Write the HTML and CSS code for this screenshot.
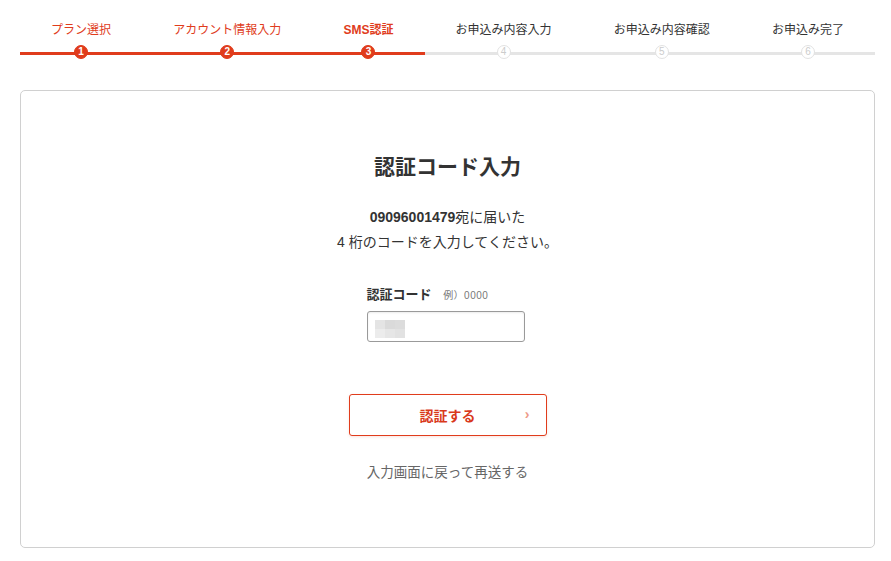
FILE: index.html
```html
<!DOCTYPE html>
<html lang="ja">

<head>
    <meta charset="UTF-8">
    <meta name="viewport" content="width=device-width, initial-scale=1.0">
    <title>SMS認証</title>
    <link rel="stylesheet" href="styles.css">
</head>

<body>
    <div class="page">
        <ol class="steps">
            <li class="step done"><span class="step-label">プラン選択</span><span class="step-num">1</span></li>
            <li class="step done"><span class="step-label">アカウント情報入力</span><span class="step-num">2</span></li>
            <li class="step done current"><span class="step-label">SMS認証</span><span class="step-num">3</span></li>
            <li class="step"><span class="step-label">お申込み内容入力</span><span class="step-num">4</span></li>
            <li class="step"><span class="step-label">お申込み内容確認</span><span class="step-num">5</span></li>
            <li class="step"><span class="step-label">お申込み完了</span><span class="step-num">6</span></li>
        </ol>

        <div class="card">
            <h1 class="title">認証コード入力</h1>
            <p class="lead"><b>09096001479</b>宛に届いた<br>4 桁のコードを入力してください。</p>

            <form class="code-form">
                <div class="field">
                    <label class="field-label" for="code">認証コード <span class="hint">例）0000</span></label>
                    <div class="code-input" id="code">
                        <span class="mosaic">
                            <i class="m1"></i><i class="m2"></i><i class="m3"></i>
                            <i class="m4"></i><i class="m5"></i><i class="m6"></i>
                        </span>
                    </div>
                </div>
                <button type="button" class="action-button">認証する<span class="chevron">›</span></button>
            </form>

            <a class="resend" href="#">入力画面に戻って再送する</a>
        </div>
    </div>
</body>

</html>
```

FILE: styles.css
```css
body {
    margin: 0;
    font-family: "Liberation Sans", Arial, "Noto Sans CJK JP", sans-serif;
    background-color: #fff;
    color: #333;
}

.page {
    padding: 0 16px 0 20px;
}

/* Progress steps */
.steps {
    display: flex;
    margin: 0;
    padding: 21px 0 0;
    list-style: none;
}

.step {
    flex: 1 1 auto;
    display: flex;
    flex-direction: column;
    align-items: center;
    height: 31px;
    border-bottom: 3px solid #e5e5e5;
    font-size: 12px;
    color: #333;
}

.step.done {
    border-bottom-color: #e03c1c;
    color: #e03c1c;
}

.step.current .step-label {
    font-weight: bold;
}

.step-label {
    line-height: 18px;
    white-space: nowrap;
}

.step-num {
    box-sizing: border-box;
    width: 14px;
    height: 14px;
    margin-top: 6px;
    border-radius: 50%;
    border: 1px solid #e2e2e2;
    background-color: #fff;
    color: #ccc;
    font-size: 10px;
    line-height: 12px;
    text-align: center;
}

.step.done .step-num {
    border-color: #e03c1c;
    background-color: #e03c1c;
    color: #fff;
    font-weight: bold;
}

/* Card */
.card {
    display: flex;
    flex-direction: column;
    align-items: center;
    margin-top: 35px;
    height: 456px;
    border: 1px solid #d0d0d0;
    border-radius: 5px;
}

.title {
    margin: 61px 0 0;
    font-size: 21px;
    line-height: 30px;
    font-weight: bold;
    color: #333;
}

.lead {
    margin: 23px 0 0;
    font-size: 14px;
    line-height: 25px;
    text-align: center;
}

.code-form {
    display: flex;
    flex-direction: column;
    align-items: center;
}

.field {
    margin: 31px 4px 0 0;
    width: 158px;
}

.field-label {
    display: block;
    font-size: 13px;
    font-weight: bold;
    line-height: 18px;
}

.hint {
    margin-left: 8px;
    font-size: 10px;
    font-weight: normal;
    letter-spacing: 0.5px;
    color: #777;
}

.code-input {
    box-sizing: border-box;
    height: 31px;
    margin-top: 6px;
    padding: 8px 7px;
    border: 1px solid #9a9a9a;
    border-radius: 3px;
    box-shadow: inset 0 1px 2px rgba(0, 0, 0, 0.08);
}

.mosaic {
    display: grid;
    grid-template-columns: repeat(3, 10px);
    grid-template-rows: repeat(2, 9px);
}

.mosaic .m1 { background-color: #e4e4e4; }
.mosaic .m2 { background-color: #dadada; }
.mosaic .m3 { background-color: #dcdcdc; }
.mosaic .m4 { background-color: #ececec; }
.mosaic .m5 { background-color: #e6e6e6; }
.mosaic .m6 { background-color: #e2e2e2; }

.action-button {
    position: relative;
    margin-top: 52px;
    width: 198px;
    height: 42px;
    border: 1px solid #e03c1c;
    border-radius: 3px;
    background-color: #fff;
    box-shadow: 0 1px 3px rgba(224, 60, 28, 0.15);
    color: #d9391b;
    font-family: inherit;
    font-size: 14px;
    font-weight: bold;
    cursor: pointer;
}

.chevron {
    position: absolute;
    right: 16px;
    top: 11px;
    font-size: 14px;
    font-weight: bold;
    color: #ee9a88;
}

.resend {
    margin-top: 25px;
    font-size: 13.5px;
    color: #666;
    text-decoration: none;
}
```
